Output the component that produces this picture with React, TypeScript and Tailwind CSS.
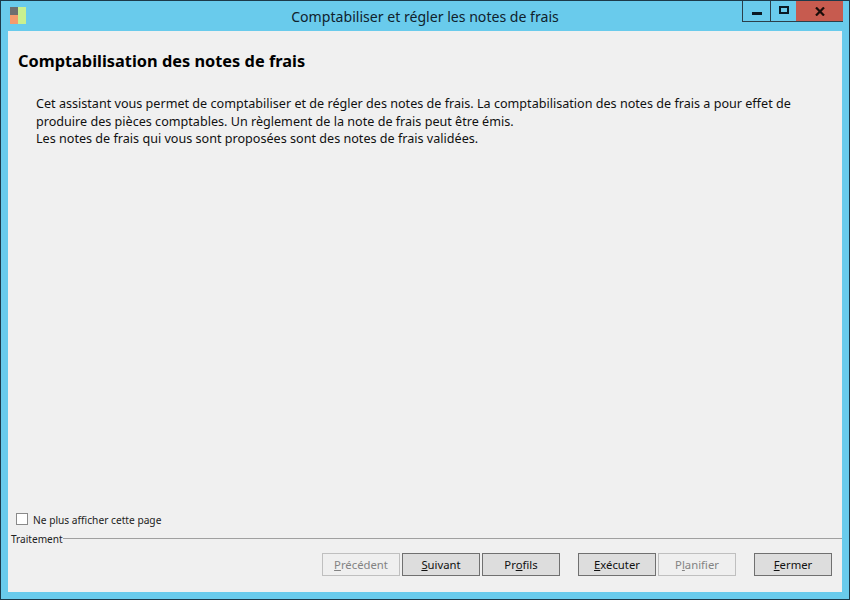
function Btn({ pre, u, post, disabled, className = "" }: { pre: string; u: string; post: string; disabled?: boolean; className?: string }) {
  return (
    <div className={`w-[78px] h-[23px] flex items-center justify-center border text-[11.3px] leading-none ${disabled ? "border-[#bfbfbf] bg-[#efefef] text-[#838383]" : "border-[#707070] bg-[#dddddd] text-[#111]"} ${className}`}>
      <span>{pre}<span className="underline">{u}</span>{post}</span>
    </div>
  );
}

export default function App() {
  return (
    <div className="w-[850px] h-[600px] flex flex-col border border-[#1c3a4a] bg-[#69cbec] text-black overflow-hidden" style={{ fontFamily: '"Noto Sans", Tahoma, sans-serif' }}>
      <div className="h-[30px] flex shrink-0 relative pl-[9px] pt-[6px]">
        <svg width="17" height="17" viewBox="0 0 17 17" className="shrink-0">
          <rect x="0" y="0" width="8" height="8" fill="#6f6f6f" />
          <rect x="0" y="8" width="8" height="9" fill="#f59b6c" />
          <rect x="8" y="0" width="8" height="17" fill="#c9f08f" />
        </svg>
        <div className="flex-1 text-center text-[14.1px] leading-[19px] text-[#10222c] pr-[26px]">Comptabiliser et régler les notes de frais</div>
        <div className="absolute right-[6px] top-0 h-[21px] flex border border-t-0 border-r-0 border-[#2b3f4a]">
          <div className="w-[28px] flex items-center justify-center border-r border-[#2b3f4a]"><div className="w-[10px] h-[3px] bg-[#0b1a24] mt-[4px]" /></div>
          <div className="w-[25px] flex items-center justify-center"><div className="w-[10px] h-[8px] border-2 border-[#0b1a24] -mt-[2px]" /></div>
          <div className="w-[47px] flex items-center justify-center bg-[#c75b4f]">
            <svg width="10" height="9" viewBox="0 0 10 9"><path d="M1 0.5 L9 8.5 M9 0.5 L1 8.5" stroke="#1a0d0a" strokeWidth="2.2" fill="none" /></svg>
          </div>
        </div>
      </div>
      <div className="mx-[7px] mb-[7px] flex-1 bg-[#f0f0f0] flex flex-col min-h-0">
        <h1 className="mt-[19px] ml-[10px] text-[16.35px] leading-[22px] font-bold">Comptabilisation des notes de frais</h1>
        <p className="mt-[23px] ml-[28px] w-[790px] text-[12.6px] leading-[17.5px] text-[#111]">
          Cet assistant vous permet de comptabiliser et de régler des notes de frais. La comptabilisation des notes de frais a pour effet de<br />
          produire des pièces comptables. Un règlement de la note de frais peut être émis.<br />
          Les notes de frais qui vous sont proposées sont des notes de frais validées.
        </p>
        <div className="flex-1" />
        <div className="flex items-center ml-[8px] h-[14px] text-[10.2px] text-[#222]">
          <div className="w-[12px] h-[12px] border border-[#8a8a8a] bg-white mr-[5px] -mt-[4px]" />
          Ne plus afficher cette page
        </div>
        <div className="flex items-center mt-[4px] h-[14px] ml-[3px] text-[10.1px] text-[#222]">
          <span className="mt-[2px]">Traitement</span>
          <div className="flex-1 h-px bg-[#a0a0a0] mb-[2px]" />
        </div>
        <div className="flex justify-end mt-[7px] mb-[16px] pr-[10px]">
          <Btn pre="" u="P" post="récédent" disabled className="mr-[2px]" />
          <Btn pre="" u="S" post="uivant" className="mr-[2px]" />
          <Btn pre="Pr" u="o" post="fils" className="mr-[18px]" />
          <Btn pre="" u="E" post="xécuter" className="mr-[2px]" />
          <Btn pre="P" u="l" post="anifier" disabled className="mr-[18px]" />
          <Btn pre="" u="F" post="ermer" />
        </div>
      </div>
    </div>
  );
}
